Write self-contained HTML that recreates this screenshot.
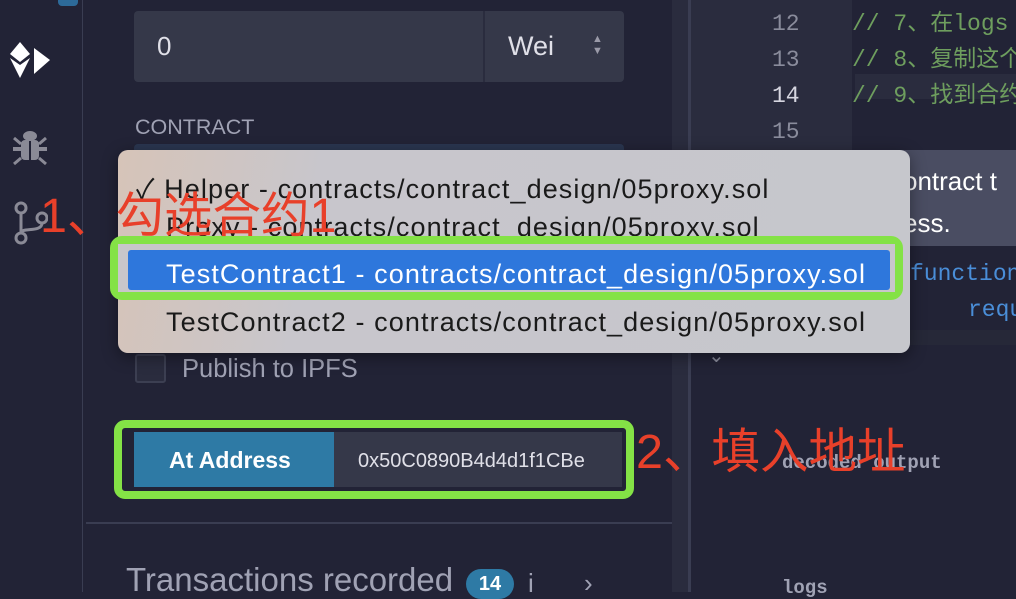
<!DOCTYPE html>
<html><head><meta charset="utf-8"><style>
*{margin:0;padding:0;box-sizing:border-box}
body{width:1016px;height:592px;overflow:hidden;background:#222336;font-family:"Liberation Sans","Noto Sans CJK SC",sans-serif;position:relative}
.a{position:absolute}
.mono{font-family:"Liberation Mono","Noto Sans CJK SC",monospace}
.dd{color:#1a1a1a;font-size:27px;letter-spacing:1.1px;white-space:nowrap}
</style></head><body>
<!-- icon bar -->
<div class="a" style="left:0;top:0;width:83px;height:592px;background:#222336;border-right:1px solid #3a3d52"></div>
<div class="a" style="left:58px;top:0;width:20px;height:6px;background:#2d6a99;border-radius:0 0 4px 4px"></div>
<svg class="a" style="left:8px;top:38px" width="44" height="44" viewBox="0 0 44 44"><polygon points="12,4 22,16 12,24 2,16" fill="#fff"/><polygon points="2,20 12,27 22,20 12,40" fill="#fff"/><polygon points="26,10 42,22 26,36" fill="#fff"/></svg>
<svg class="a" style="left:10px;top:128px" width="40" height="40" viewBox="0 0 40 40" fill="#8a8a96"><ellipse cx="20" cy="8" rx="7" ry="5"/><rect x="11" y="12" width="18" height="20" rx="4"/><rect x="3" y="19" width="34" height="4"/><path d="M4 10l7 6M36 10l-7 6M4 36l7-6M36 36l-7-6" stroke="#8a8a96" stroke-width="3"/><rect x="19" y="13" width="2" height="19" fill="#222336"/></svg>
<svg class="a" style="left:12px;top:200px" width="36" height="46" viewBox="0 0 36 46" fill="none" stroke="#8a8a96" stroke-width="3"><circle cx="9" cy="8" r="5"/><circle cx="9" cy="38" r="5"/><circle cx="30" cy="18" r="5"/><path d="M9 13v20M30 23c0 10-21 4-21 10"/></svg>
<!-- panel -->
<div class="a" style="left:134px;top:11px;width:490px;height:71px;background:#353849;border-radius:4px"></div>
<div class="a" style="left:483px;top:11px;width:2px;height:71px;background:#2a2c3e"></div>
<div class="a" style="left:157px;top:31px;color:#e0e0e8;font-size:26px">0</div>
<div class="a" style="left:508px;top:31px;color:#e0e0e8;font-size:27px">Wei</div>
<div class="a" style="left:592px;top:33px;color:#9a9aa8;font-size:11px;line-height:12px">▲<br>▼</div>
<div class="a" style="left:135px;top:115px;color:#a0a2b4;font-size:21.5px">CONTRACT</div>
<div class="a" style="left:134px;top:144px;width:490px;height:10px;background:#2a3650;border-radius:4px"></div>
<div class="a" style="left:135px;top:354px;width:31px;height:29px;border:2px solid #3c3f52;border-radius:3px;background:#2a2c3e"></div>
<div class="a" style="left:182px;top:355px;color:#a0a2b4;font-size:25.5px">Publish to IPFS</div>
<!-- at address -->
<div class="a" style="left:114px;top:420px;width:520px;height:79px;border:8px solid #84e246;border-radius:11px;background:#222336"></div>
<div class="a" style="left:126px;top:432px;width:8px;height:55px;background:#222336"></div>
<div class="a" style="left:134px;top:432px;width:200px;height:55px;background:#2e7aa5"></div>
<div class="a" style="left:334px;top:432px;width:288px;height:55px;background:#353849"></div>
<div class="a" style="left:169px;top:447px;color:#fff;font-size:23px;font-weight:bold">At Address</div>
<div class="a" style="left:358px;top:450px;color:#e0e0e8;font-size:20px;width:244px;overflow:hidden;white-space:nowrap">0x50C0890B4d4d1f1CBe</div>
<div class="a" style="left:86px;top:522px;width:586px;height:2px;background:#3a3d52"></div>
<div class="a" style="left:126px;top:561px;color:#a0a2b4;font-size:33px">Transactions recorded</div>
<div class="a" style="left:466px;top:569px;width:48px;height:30px;border-radius:15px;background:#2e7aa5;color:#fff;font-size:20px;font-weight:bold;text-align:center;line-height:30px">14</div>
<div class="a" style="left:528px;top:568px;color:#a0a2b4;font-size:26px">i</div>
<div class="a" style="left:584px;top:568px;color:#a0a2b4;font-size:26px">›</div>
<!-- divider -->
<div class="a" style="left:672px;top:0;width:18px;height:592px;background:#2a2c3e"></div>
<div class="a" style="left:688px;top:0;width:3px;height:592px;background:#3a3d52"></div>
<!-- editor -->
<div class="a" style="left:691px;top:0;width:325px;height:340px;background:#2a2c3e"></div>
<div class="a" style="left:852px;top:0;width:164px;height:340px;background:#222336"></div>
<div class="a" style="left:855px;top:74px;width:161px;height:25px;background:#2a2c3e"></div>
<div class="a mono" style="left:772px;top:6px;color:#8a8c9c;font-size:23px;line-height:36px">12<br>13<br><span style="color:#d6d6e0">14</span><br>15</div>
<div class="a mono" style="left:852px;top:6px;color:#6e9e5e;font-size:23px;line-height:36px;white-space:nowrap">// 7、在logs<br>// 8、复制这个<br>// 9、找到合约</div>
<div class="a" style="left:860px;top:150px;width:156px;height:96px;background:#4a4d62"></div>
<div class="a" style="left:903px;top:160px;color:#fff;font-size:26px;line-height:42px;white-space:nowrap">ontract t<br>ess.</div>
<div class="a mono" style="left:910px;top:261px;color:#4a8ed8;font-size:23px">function</div>
<div class="a mono" style="left:968px;top:297px;color:#4a8ed8;font-size:23px">requ</div>
<div class="a" style="left:691px;top:340px;width:325px;height:252px;background:#222336"></div>
<div class="a" style="left:691px;top:330px;width:325px;height:15px;background:#262838"></div>
<div class="a" style="left:708px;top:343px;color:#8a8c9c;font-size:20px">⌄</div>
<div class="a mono" style="left:782px;top:452px;color:#a0a2b4;font-size:19px;font-weight:bold">decoded output</div>
<div class="a mono" style="left:782px;top:577px;color:#a0a2b4;font-size:19px;font-weight:bold">logs</div>
<!-- dropdown -->
<div class="a" style="left:118px;top:150px;width:792px;height:203px;border-radius:10px;background:linear-gradient(100deg,#d6c4b8 0%,#c8c6cc 25%,#c6c7cc 100%);box-shadow:0 4px 16px rgba(0,0,0,.4)"></div>
<div class="a dd" style="left:136px;top:167px">✓ Helper - contracts/contract_design/05proxy.sol</div>
<div class="a dd" style="left:166px;top:212px;height:25px;overflow:hidden">Proxy - contracts/contract_design/05proxy.sol</div>
<div class="a dd" style="left:166px;top:307px">TestContract2 - contracts/contract_design/05proxy.sol</div>
<div class="a" style="left:110px;top:236px;width:793px;height:64px;border:8px solid #84e246;border-radius:12px"></div>
<div class="a" style="left:118px;top:244px;width:777px;height:48px;background:#c8c6ca"></div>
<div class="a" style="left:128px;top:250px;width:762px;height:40px;background:#2e77dc;border-radius:3px"></div>
<div class="a dd" style="left:166px;top:259px;color:#fff">TestContract1 - contracts/contract_design/05proxy.sol</div>
<!-- annotations -->
<div class="a" style="left:40px;top:187px;color:#e8402a;font-size:48.5px;white-space:nowrap;line-height:58px">1、勾选合约1</div>
<div class="a" style="left:636px;top:423px;color:#e8402a;font-size:48.5px;white-space:nowrap;line-height:58px">2、填入地址</div>
</body></html>
